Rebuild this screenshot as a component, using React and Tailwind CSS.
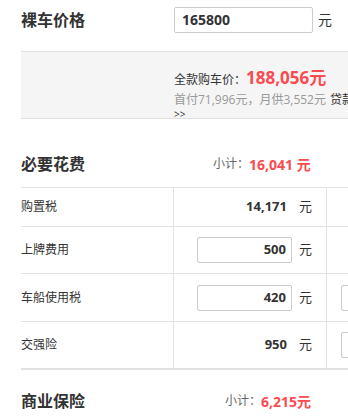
import React from "react";

const font = { fontFamily: '"Open Sans", "Noto Sans CJK SC", sans-serif' };

const rows = [
  { label: "购置税", value: "14,171", input: false, side: false, h: "h-[39px]" },
  { label: "上牌费用", value: "500", input: true, side: false, h: "h-[47px]" },
  { label: "车船使用税", value: "420", input: true, side: true, h: "h-[48px]" },
  { label: "交强险", value: "950", input: false, side: true, h: "h-[46px]" },
];

export default function App() {
  return (
    <div className="w-[348px] h-[419px] overflow-hidden bg-white text-[#333]" style={font}>
      <div className="w-[480px] pl-[21px]">
        {/* 裸车价格 */}
        <div className="flex items-center h-[38px] pt-[1px]">
          <div className="w-[153px] text-[16px] font-bold leading-none">裸车价格</div>
          <div className="w-[139px] h-[26px] border border-[#ccc] rounded-[2px] flex items-center pl-[7px] text-[14px] font-bold">
            165800
          </div>
          <span className="ml-[5px] text-[14px]">元</span>
        </div>

        {/* 全款 */}
        <div className="mt-[13px] h-[68px] bg-[#f5f5f5] border-t border-b border-[#e0e0e0] pl-[153px] pt-[17px]">
          <div className="flex items-baseline leading-none">
            <span className="text-[12px]">全款购车价：</span>
            <span className="text-[17px] font-bold text-[#fa4b50]">188,056元</span>
          </div>
          <div className="mt-[8px] text-[12px] leading-none whitespace-nowrap">
            <span className="text-[#999]">首付71,996元，月供3,552元</span>
            <span className="ml-[4px]">贷款计算</span>
          </div>
          <div className="text-[10px] leading-none mt-[3px]">&gt;&gt;</div>
        </div>

        {/* 必要花费 */}
        <div className="flex items-center h-[68px] pt-[22px]">
          <div className="w-[192px] text-[16px] font-bold">必要花费</div>
          <div className="text-[12px] text-[#666]">小计：</div>
          <div className="text-[14px] font-bold text-[#fa4b50]">16,041 元</div>
        </div>

        <div className="border-t border-[#e2e2e2] border-b-2">
          {rows.map((r, i) => (
            <div
              key={r.label}
              className={`flex ${r.h} ${i < rows.length - 1 ? "border-b border-[#e2e2e2]" : ""}`}
            >
              <div className="w-[152px] flex items-center text-[12px]">{r.label}</div>
              <div className="w-[154px] border-l border-r border-[#e2e2e2] flex items-center justify-end pr-[14px]">
                {r.input ? (
                  <div className="w-[95px] h-[26px] border border-[#ccc] rounded-[2px] flex items-center justify-end pr-[5px] text-[13px] font-bold">
                    {r.value}
                  </div>
                ) : (
                  <span className="text-[13px] font-bold">{r.value}</span>
                )}
                <span className={`text-[13px] ${r.input ? "ml-[7px]" : "ml-[12px]"}`}>元</span>
              </div>
              <div className="flex-1 flex items-center pl-[14px]">
                {r.side && <div className="w-[60px] h-[26px] border border-[#ccc] rounded-[2px]" />}
              </div>
            </div>
          ))}
        </div>

        {/* 商业保险 */}
        <div className="flex items-center h-[62px]">
          <div className="w-[204px] text-[16px] font-bold">商业保险</div>
          <div className="text-[12px] text-[#666]">小计：</div>
          <div className="text-[14px] font-bold text-[#fa4b50]">6,215元</div>
        </div>
      </div>
    </div>
  );
}
